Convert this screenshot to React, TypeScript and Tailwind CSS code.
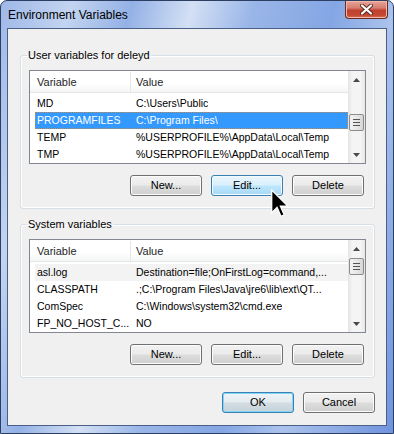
import React from 'react';

type Row = { name: string; value: string; state?: 'selected' | 'soft' };

const userVars: Row[] = [
  { name: 'MD', value: 'C:\\Users\\Public' },
  { name: 'PROGRAMFILES', value: 'C:\\Program Files\\', state: 'selected' },
  { name: 'TEMP', value: '%USERPROFILE%\\AppData\\Local\\Temp' },
  { name: 'TMP', value: '%USERPROFILE%\\AppData\\Local\\Temp' },
];

const systemVars: Row[] = [
  { name: 'asl.log', value: 'Destination=file;OnFirstLog=command,...', state: 'soft' },
  { name: 'CLASSPATH', value: '.;C:\\Program Files\\Java\\jre6\\lib\\ext\\QT...' },
  { name: 'ComSpec', value: 'C:\\Windows\\system32\\cmd.exe' },
  { name: 'FP_NO_HOST_C...', value: 'NO' },
];

type BtnKind = 'normal' | 'hover' | 'default';

function Button({ label, kind = 'normal' }: { label: string; kind?: BtnKind }) {
  let look = 'border-[#707070] bg-[linear-gradient(#f2f2f2_0%,#ebebeb_48%,#dddddd_52%,#cfcfcf_100%)] shadow-[inset_0_0_0_1px_#fcfcfc]';
  if (kind === 'hover') {
    look = 'border-[#3c7fb1] bg-[linear-gradient(#eaf6fd_0%,#d9f0fc_48%,#bee6fd_52%,#a7d9f5_100%)] shadow-[inset_0_0_0_1px_#f4fbff]';
  } else if (kind === 'default') {
    look = 'border-[#3c7fb1] bg-[linear-gradient(#eef3f6_0%,#e4ecf0_48%,#d3dde2_52%,#c7d3d9_100%)] shadow-[inset_0_0_0_1px_#7fd6f8]';
  }
  return (
    <div className={`w-[72px] h-[21px] rounded-[3px] border flex items-center justify-center text-[11px] text-black ${look}`}>
      {label}
    </div>
  );
}

function ScrollBar({ thumbTop }: { thumbTop: string }) {
  return (
    <div className="w-[17px] h-full flex flex-col bg-[linear-gradient(90deg,#e3e3e3_0%,#f4f4f4_25%,#f4f4f4_75%,#e6e6e6_100%)]">
      <div className="h-[17px] flex items-center justify-center">
        <svg width="7" height="4" viewBox="0 0 7 4">
          <path d="M3.5 0 L7 4 L0 4 Z" fill="#4a4a4a" />
        </svg>
      </div>
      <div className="flex-1 flex flex-col">
        <div className={`${thumbTop} mx-[1px] h-[17px] rounded-[2px] border border-[#8c8c8c] bg-[linear-gradient(90deg,#f2f2f2_0%,#e8e8e8_50%,#d6d6d6_100%)] flex flex-col items-center justify-center gap-[2px]`}>
          <div className="w-[7px] h-[1px] bg-[#555]" />
          <div className="w-[7px] h-[1px] bg-[#555]" />
          <div className="w-[7px] h-[1px] bg-[#555]" />
        </div>
      </div>
      <div className="h-[17px] flex items-center justify-center">
        <svg width="7" height="4" viewBox="0 0 7 4">
          <path d="M0 0 L7 0 L3.5 4 Z" fill="#4a4a4a" />
        </svg>
      </div>
    </div>
  );
}

function VarList({ rows, thumbTop }: { rows: Row[]; thumbTop: string }) {
  return (
    <div className="w-[337px] h-[94px] border border-[#828790] bg-white flex overflow-hidden">
      <div className="flex-1 flex flex-col min-w-0">
        <div className="h-[24px] pt-[1px] flex border-b border-[#e5e5e5] bg-[linear-gradient(#ffffff_0%,#ffffff_60%,#f4f5f6_100%)] text-[11px] text-[#1e1e1e]">
          <div className="w-[100px] pl-[7px] flex items-center">Variable</div>
          <div className="w-[1px] bg-[#e3e5e8]" />
          <div className="pl-[5px] flex items-center">Value</div>
        </div>
        <div className="mt-[2px] flex flex-col">
          {rows.map((r) => {
            let look = 'text-black';
            if (r.state === 'selected') look = 'bg-[#3399ff] text-white outline outline-1 outline-dotted outline-offset-[-1px] outline-[#c98b4a]';
            if (r.state === 'soft') look = 'bg-[#f3f3f3] text-black';
            return (
              <div key={r.name} className={`ml-[5px] h-[17px] flex items-center text-[10.5px] whitespace-nowrap ${look}`}>
                <div className="w-[97px] pl-[2px] overflow-hidden">{r.name}</div>
                <div className="pl-[4px] overflow-hidden">{r.value}</div>
              </div>
            );
          })}
        </div>
      </div>
      <ScrollBar thumbTop={thumbTop} />
    </div>
  );
}

function Group({ title, rows, thumbTop, className }: { title: string; rows: Row[]; thumbTop: string; className: string }) {
  return (
    <fieldset className={`w-[355px] border border-[#d5dfe5] rounded-[3px] px-[8px] pt-[8px] pb-[12px] shadow-[inset_0_0_0_1px_#ffffff] ${className}`}>
      <legend className="ml-[-2px] px-[1px] text-[11px] leading-[13px] text-black">{title}</legend>
      <VarList rows={rows} thumbTop={thumbTop} />
      <div className="mt-[11px] flex justify-end gap-[9px] pr-[2px]">
        <Button label="New..." />
        <Button label="Edit..." kind={title.startsWith('User') ? 'hover' : 'normal'} />
        <Button label="Delete" />
      </div>
    </fieldset>
  );
}

export default function App() {
  return (
    <div className="w-[394px] h-[434px] font-['Liberation_Sans',Arial,sans-serif] select-none">
      <div className="relative w-[394px] h-[434px] rounded-t-[7px] border border-[#2d3e63] flex flex-col bg-[linear-gradient(105deg,#9fb8e8_0%,#c2d4f0_14%,#94b1e6_26%,#d3e0f4_38%,#9ab6e8_50%,#84a6e4_66%,#abc3ec_78%,#6f93dd_100%)]">
        <div className="h-[27px] flex items-start justify-between">
          <div className="pl-[7px] pt-[7px] text-[12px] leading-[14px] text-black">Environment Variables</div>
          <div className="mr-[5px] w-[43px] h-[18px] rounded-b-[4px] border border-t-0 border-[#6b2a22] bg-[linear-gradient(#e6a598_0%,#d77f70_40%,#c0402f_55%,#c54a33_85%,#d9785c_100%)] shadow-[inset_0_0_0_1px_#f0b8a8] flex items-center justify-center">
            <svg width="13" height="11" viewBox="0 0 13 11">
              <path d="M2 1.5 L11 9.5 M11 1.5 L2 9.5" stroke="#5a2a22" strokeWidth="4" strokeLinecap="round" />
              <path d="M2 1.5 L11 9.5 M11 1.5 L2 9.5" stroke="#ffffff" strokeWidth="2.2" strokeLinecap="round" />
            </svg>
          </div>
        </div>
        <div className="mx-[6px] h-[398px] border border-[#4a5e86] bg-[#f0f0f0] flex flex-col">
          <Group title="User variables for deleyd" rows={userVars} thumbTop="mt-[26px]" className="ml-[12px] mt-[20px]" />
          <Group title="System variables" rows={systemVars} thumbTop="mt-[1px]" className="ml-[12px] mt-[9px]" />
          <div className="mt-[14px] ml-[214px] flex gap-[9px]">
            <Button label="OK" kind="default" />
            <Button label="Cancel" />
          </div>
        </div>
        <div className="absolute left-[270px] top-[188px]">
          <svg width="17" height="29" viewBox="0 0 12 20">
            <path d="M0.5 0.5 L0.5 16.5 L4.3 12.8 L7 19 L9.3 18 L6.6 11.8 L11.8 11.8 Z" fill="#000000" stroke="#ffffff" strokeWidth="0.9" strokeLinejoin="miter" />
          </svg>
        </div>
      </div>
    </div>
  );
}
